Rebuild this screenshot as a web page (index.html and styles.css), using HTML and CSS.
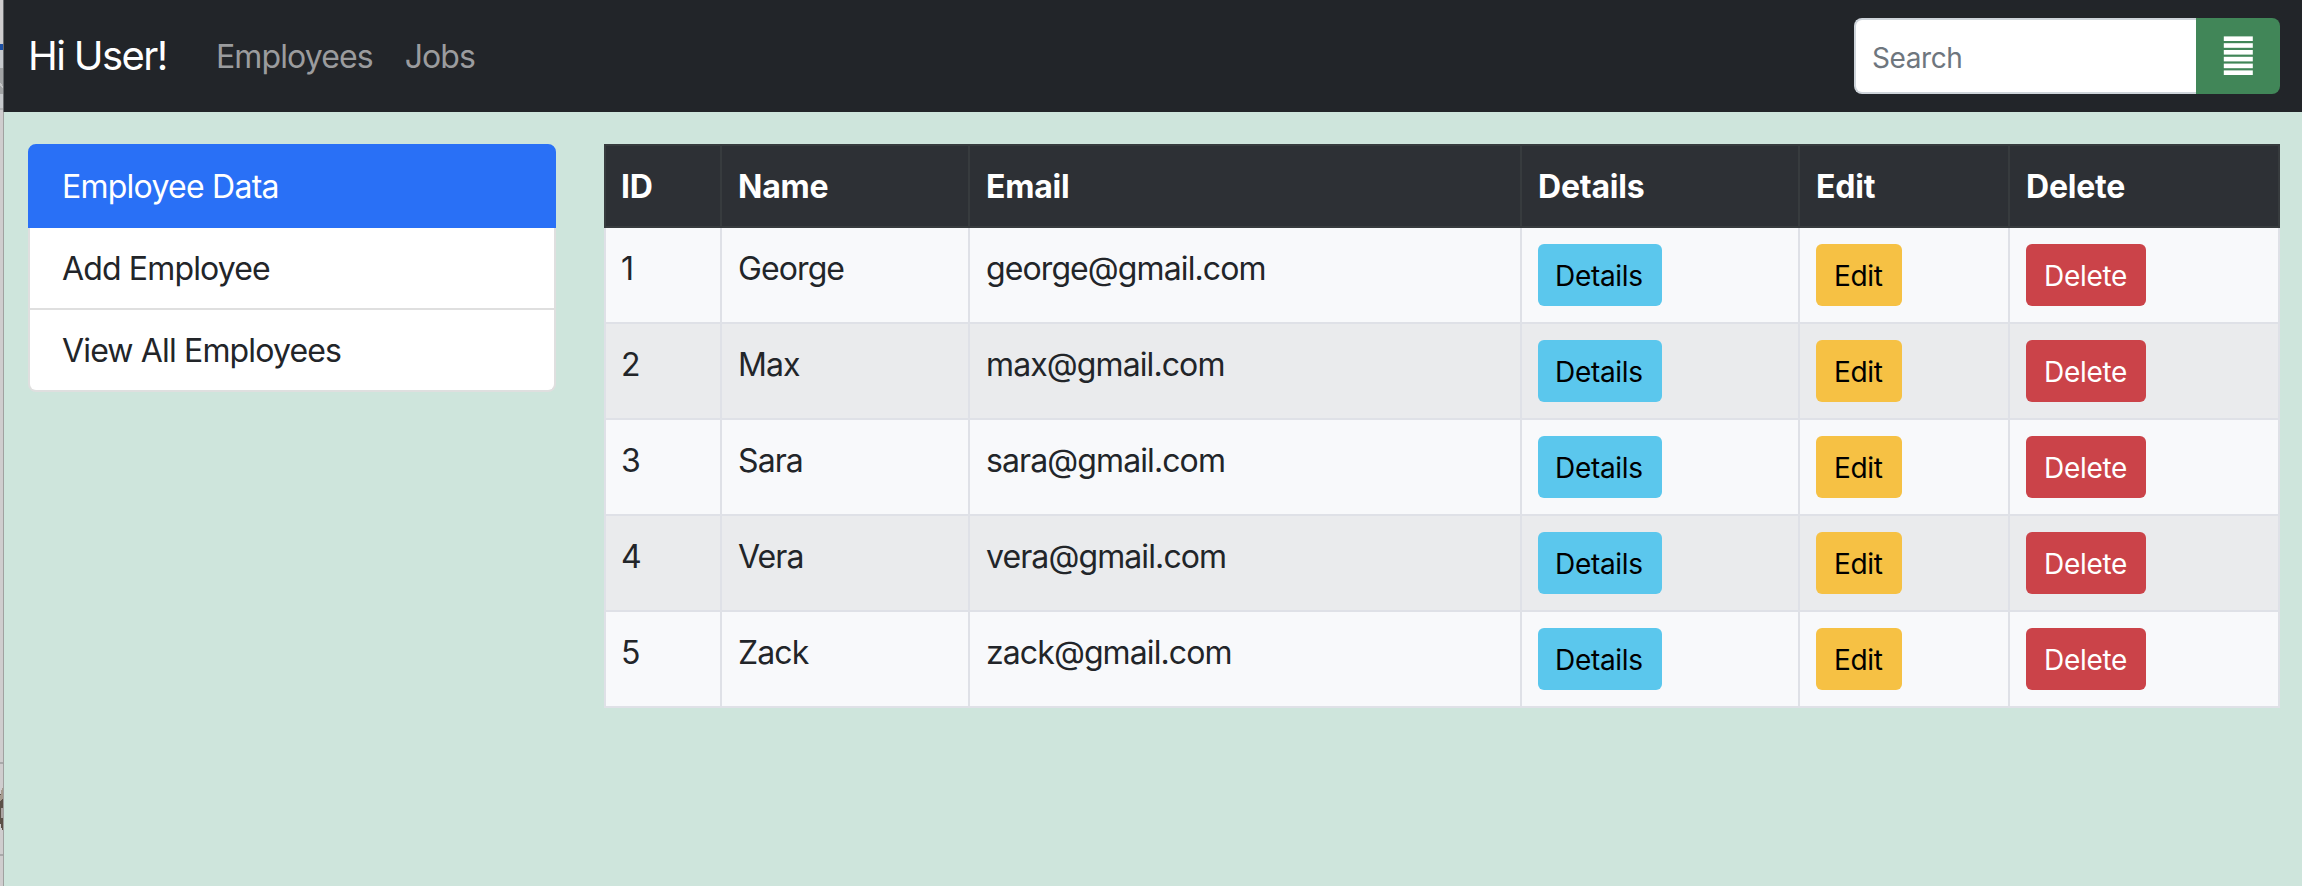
FILE: index.html
```html
<!DOCTYPE html>
<html lang="en">
<head>
<meta charset="utf-8">
<title>Employees</title>
<link rel="stylesheet" href="styles.css">
</head>
<body>
<div class="edge">
<svg width="4" height="886" viewBox="0 0 4 886" shape-rendering="crispEdges">
<rect width="4" height="886" fill="#cfcdce"/>
<rect y="44" width="4" height="6" fill="#1d50a4"/>
<rect y="50" width="4" height="58" fill="#c6c9cc"/>
<rect y="68" width="4" height="26" fill="#a2a4a5"/>
<path d="M0 82l4 6v2l-4-5z" fill="#c4c5c6"/>
<rect y="108" width="4" height="2" fill="#b0b2b3"/>
<rect y="762" width="4" height="2" fill="#a9a9aa"/>
<path d="M2 788h2v42H2l-2-8v-26z" fill="#5b5047"/>
<path d="M2 788h2v9l-4 5v-5z" fill="#a59b8e"/>
<path d="M1 808h3v10H1z" fill="#aaa3a1"/>
<rect y="854" width="4" height="2" fill="#a9a9aa"/>
<rect x="3" width="1" height="112" fill="#65686b"/>
<rect x="3" y="112" width="1" height="774" fill="#a0a1a0"/>
</svg>
</div>
<div class="page">
<nav class="navbar">
<a class="brand">Hi User!</a>
<a class="nav-link employees">Employees</a>
<a class="nav-link">Jobs</a>
<form class="search">
<input class="search-input" type="text" placeholder="Search">
<button class="search-button" type="button" aria-label="Search">
<svg width="30" height="40" viewBox="0 0 30 40" fill="#fff">
<rect x=".8" y="0.4" width="29" height="4.6"/><rect x=".8" y="7.2" width="29" height="4.6"/><rect x=".8" y="14" width="29" height="4.6"/><rect x=".8" y="20.8" width="29" height="4.6"/><rect x=".8" y="27.6" width="29" height="4.6"/><rect x=".8" y="34.4" width="29" height="4.6"/>
</svg>
</button>
</form>
</nav>
<main class="content">
<div class="list-group">
<a class="list-item active">Employee Data</a>
<a class="list-item">Add Employee</a>
<a class="list-item">View All Employees</a>
</div>
<table class="table">
<colgroup><col class="c-id"><col class="c-name"><col class="c-email"><col class="c-details"><col class="c-edit"><col class="c-delete"></colgroup>
<thead><tr><th>ID</th><th>Name</th><th>Email</th><th>Details</th><th>Edit</th><th>Delete</th></tr></thead>
<tbody>
<tr><td>1</td><td>George</td><td>george@gmail.com</td><td><a class="btn info">Details</a></td><td><a class="btn warning">Edit</a></td><td><a class="btn danger">Delete</a></td></tr>
<tr><td>2</td><td>Max</td><td>max@gmail.com</td><td><a class="btn info">Details</a></td><td><a class="btn warning">Edit</a></td><td><a class="btn danger">Delete</a></td></tr>
<tr><td>3</td><td>Sara</td><td>sara@gmail.com</td><td><a class="btn info">Details</a></td><td><a class="btn warning">Edit</a></td><td><a class="btn danger">Delete</a></td></tr>
<tr><td>4</td><td>Vera</td><td>vera@gmail.com</td><td><a class="btn info">Details</a></td><td><a class="btn warning">Edit</a></td><td><a class="btn danger">Delete</a></td></tr>
<tr><td>5</td><td>Zack</td><td>zack@gmail.com</td><td><a class="btn info">Details</a></td><td><a class="btn warning">Edit</a></td><td><a class="btn danger">Delete</a></td></tr>
</tbody>
</table>
</main>
</div>
</body>
</html>
```
FILE: styles.css
```css
* { box-sizing: border-box; }
body {
  margin: 0;
  height: 886px;
  display: flex;
  overflow: hidden;
  background: #cee5dc;
  color: #222529;
  font: 32px/48px Inter, "Liberation Sans", sans-serif;
  letter-spacing: -0.9px;
}
.edge { flex: none; width: 4px; height: 886px; line-height: 0; }
.page { flex: 1; min-width: 0; }
.navbar {
  display: flex;
  align-items: center;
  height: 112px;
  padding: 0 22px 0 24px;
  background: #222529;
}
.brand {
  width: 172px;
  font-size: 40px;
  line-height: 60px;
  letter-spacing: -1.6px;
  color: #fff;
  white-space: nowrap;
}
.nav-link { padding: 2px 16px 0; color: #9b9c9e; }
.search { display: flex; width: 426px; height: 76px; margin-left: auto; }
.search-input {
  width: 342px;
  height: 76px;
  padding: 4px 16px 0;
  border: 2px solid #ced4da;
  border-right: 0;
  border-radius: 8px 0 0 8px;
  background: #fff;
  font: 28px/42px Inter, "Liberation Sans", sans-serif;
  letter-spacing: -0.4px;
}
.search-input::placeholder { color: #6e767e; opacity: 1; }
.search-button {
  display: flex;
  align-items: center;
  justify-content: center;
  width: 84px;
  height: 76px;
  padding: 0;
  border: 0;
  border-radius: 0 8px 8px 0;
  background: #418658;
}
.content {
  display: flex;
  align-items: flex-start;
  gap: 48px;
  padding: 32px 22px 0 24px;
}
.list-group { flex: none; width: 528px; }
.list-item {
  display: block;
  padding: 17px 32px 15px;
  border: 2px solid #dfdfdf;
  border-top: 0;
  background: #fff;
  letter-spacing: -0.85px;
}
.list-item.active {
  border: 2px solid #2970f6;
  border-radius: 8px 8px 0 0;
  background: #2970f6;
  color: #fff;
  letter-spacing: -0.75px;
}
.list-item:last-child { border-radius: 0 0 8px 8px; }
.table {
  width: 1676px;
  table-layout: fixed;
  border-collapse: separate;
  border-spacing: 0;
}
.c-id { width: 118px; }
.c-name { width: 248px; }
.c-email { width: 552px; }
.c-details { width: 278px; }
.c-edit { width: 210px; }
.c-delete { width: 270px; }
th, td {
  padding: 17px 16px 15px;
  border: 0 solid #dfe1e7;
  border-width: 0 2px 2px 0;
  text-align: left;
  vertical-align: top;
}
th:first-child, td:first-child { border-left-width: 2px; padding-left: 15px; }
th {
  height: 84px;
  border-color: #373b3e;
  border-top-width: 2px;
  background: #2d3035;
  color: #fff;
  font-weight: 700;
  letter-spacing: -0.2px;
}
td { height: 96px; background: #f8f9fb; }
td:nth-child(n+4) { padding: 16px; }
tr:nth-child(even) td { background: #eaebed; }
.btn {
  display: block;
  width: max-content;
  height: 62px;
  padding: 11px 0 9px 17px;
  border-radius: 6px;
  font-size: 28px;
  line-height: 42px;
  letter-spacing: -0.3px;
}
.info { width: 124px; background: #5bc7ed; color: #000; }
.warning { width: 86px; padding-left: 18px; background: #f6c144; color: #000; }
.danger { width: 120px; padding-left: 18px; background: #cb4349; color: #fff; }
```
